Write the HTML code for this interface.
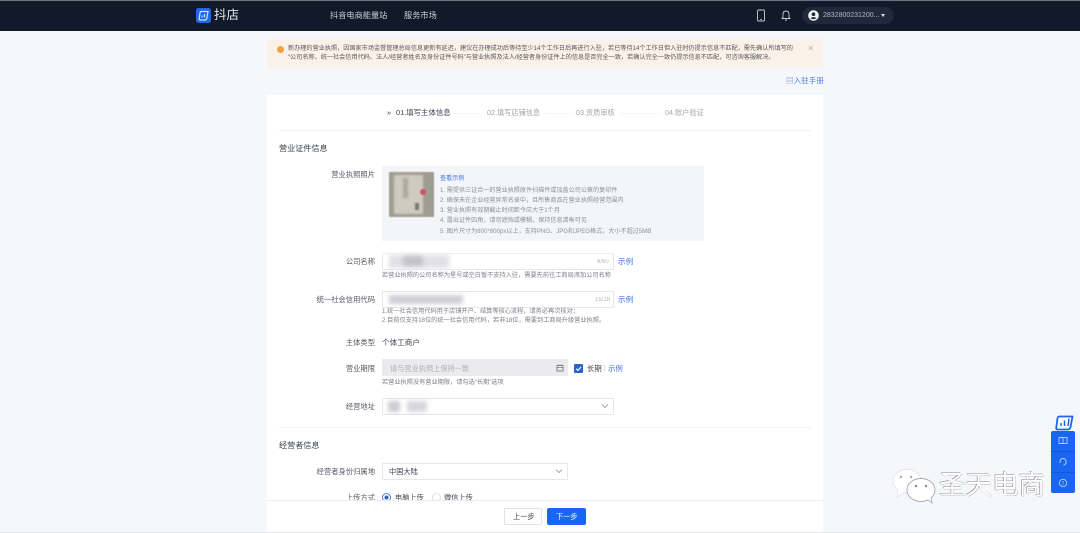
<!DOCTYPE html>
<html lang="zh">
<head>
<meta charset="utf-8">
<title>抖店</title>
<style>
html,body{margin:0;padding:0;width:1080px;height:533px;overflow:hidden;background:#f6f7fb;}
body{position:relative;font-family:"Liberation Sans","Noto Sans CJK SC",sans-serif;color:#3f4450;}
.a,.t{position:absolute;}
.t{white-space:nowrap;line-height:1;filter:blur(.35px);margin-top:1px;}
.lab{font-size:7.3px;color:#565a66;text-align:right;right:705px;}
.help{font-size:6.2px;color:#7c808a;left:382px;}
.tip{font-size:6.1px;color:#8d919b;left:440px;}
.link{color:#3f75e6;}
.box{position:absolute;background:#fff;border:1px solid #e6e7ea;box-sizing:border-box;border-radius:1px;}
.blur{position:absolute;background:#c9c9cf;filter:blur(2px);}
</style>
</head>
<body>
<!-- header -->
<div class="a" style="left:0;top:0;width:1080px;height:31px;background:#121a2a;border-top:1px solid #6b7280;box-sizing:border-box;"></div>
<svg class="a" style="left:196px;top:8px" width="15" height="15" viewBox="0 0 15 15">
<rect x="0" y="0" width="15" height="15" rx="2.5" fill="#1d6ae5"/>
<path d="M5 3.500H12L10.800 10.500Q10.400 12 8.800 12H4Q3 12 3.200 10.500L4 5Q4.200 3.500 5 3.500Z" fill="none" stroke="#cfe2ff" stroke-width="1.2"/>
<path d="M6 9.500V7.500M8.500 9.500V6" stroke="#cfe2ff" stroke-width="1.2"/>
</svg>
<div class="t" style="left:214px;top:9px;font-size:12.5px;color:#e4e6ea;margin-top:0;">抖店</div>
<div class="t" style="left:330px;top:12px;font-size:8.2px;color:#c9ccd2;margin-top:0;">抖音电商能量站</div>
<div class="t" style="left:404px;top:12px;font-size:8.2px;color:#c9ccd2;margin-top:0;">服务市场</div>
<svg class="a" style="left:756px;top:9px" width="10" height="13" viewBox="0 0 10 13"><rect x="1.500" y="1" width="7" height="11" rx="1" fill="none" stroke="#c9ccd2" stroke-width=".9"/><path d="M4 10.300H6" stroke="#c9ccd2" stroke-width=".8"/></svg>
<svg class="a" style="left:781px;top:9px" width="10" height="13" viewBox="0 0 10 13"><path d="M1 9.500H9L8 8V5.200Q8 2.200 5 2Q2 2.200 2 5.200V8ZM4 11H6" fill="none" stroke="#c9ccd2" stroke-width=".9"/></svg>
<div class="a" style="left:802px;top:7px;width:92px;height:17px;border-radius:9px;background:#20283a;"></div>
<svg class="a" style="left:808px;top:10px" width="11" height="11" viewBox="0 0 11 11"><circle cx="5.500" cy="5.500" r="5.300" fill="#f2f3f5"/><circle cx="5.500" cy="4.200" r="1.800" fill="#20283a"/><path d="M2.400 8.300Q5.500 5.800 8.600 8.300Q5.500 10 2.400 8.300Z" fill="#20283a"/></svg>
<div class="t" style="left:823px;top:12px;font-size:7px;color:#b3b7bf;margin-top:0;">2832800231200...</div>
<div class="a" style="left:881px;top:14px;border:2.6px solid transparent;border-top:3px solid #dfe1e5;border-bottom:0;"></div>

<!-- alert -->
<div class="a" style="left:267px;top:39px;width:556px;height:28px;background:#faf1e9;border-radius:2px;"></div>
<div class="a" style="left:277px;top:46px;width:7px;height:7px;border-radius:50%;background:#f3a13c;"></div>
<div class="t" style="left:288px;top:44.500px;font-size:6.150px;color:#5b5a5a;">新办理的营业执照&#65292;因国家市场监督管理总局信息更新有延迟&#65292;建议在办理成功后等待至少14个工作日后再进行入驻&#65292;若已等待14个工作日但入驻时仍提示信息不匹配&#65292;需先确认所填写的</div>
<div class="t" style="left:288px;top:53.500px;font-size:6.150px;color:#5b5a5a;">“公司名称、统一社会信用代码、法人/经营者姓名及身份证件号码”与营业执照及法人/经营者身份证件上的信息是否完全一致&#65292;若确认完全一致仍提示信息不匹配&#65292;可咨询客服解决。</div>
<div class="t" style="left:808px;top:43px;font-size:9px;color:#b0a9a3;">×</div>

<div class="t link" style="left:786px;top:76px;font-size:7.600px;color:#4f80e6;">▤入驻手册</div>

<!-- card -->
<div class="a" style="left:267px;top:95px;width:556px;height:438px;background:#fff;"></div>

<!-- steps -->
<div class="t" style="left:387px;top:108px;font-size:7.400px;color:#3f4450;">»</div>
<div class="t" style="left:396px;top:108px;font-size:7.400px;color:#3f4450;">01.填写主体信息</div>
<div class="a" style="left:454px;top:113px;width:28px;border-top:1px dotted #eeeef0;"></div>
<div class="t" style="left:487px;top:108px;font-size:7.200px;color:#a2a5ad;">02.填写店铺信息</div>
<div class="a" style="left:544px;top:113px;width:28px;border-top:1px dotted #eeeef0;"></div>
<div class="t" style="left:576px;top:108px;font-size:7.200px;color:#a2a5ad;">03.资质审核</div>
<div class="a" style="left:620px;top:113px;width:40px;border-top:1px dotted #eeeef0;"></div>
<div class="t" style="left:665px;top:108px;font-size:7.200px;color:#a2a5ad;">04.账户验证</div>
<div class="a" style="left:279px;top:130px;width:532px;height:1px;background:#f3f3f5;"></div>

<div class="t" style="left:279px;top:144px;font-size:8.100px;color:#3f4450;">营业证件信息</div>

<!-- license -->
<div class="t lab" style="top:170px;">营业执照照片</div>
<div class="a" style="left:382px;top:166px;width:322px;height:75px;background:#f4f5f8;"></div>
<div class="a" style="left:389px;top:172px;width:45px;height:45px;background:#a09c92;border-radius:1px;filter:blur(.6px);"></div>
<div class="a" style="left:394px;top:175px;width:29px;height:39px;background:#cfcbc1;filter:blur(1px);"></div>
<div class="a" style="left:403px;top:178px;width:5px;height:20px;background:#aca89b;filter:blur(1px);"></div>
<div class="a" style="left:415px;top:203px;width:4px;height:7px;background:#77796e;filter:blur(.8px);"></div>
<div class="a" style="left:420px;top:189px;width:6px;height:6px;border-radius:50%;background:#d8505f;filter:blur(.6px);"></div>
<div class="t tip link" style="top:175px;color:#3f75e6;">查看示例</div>
<div class="t tip" style="top:187px;">1. 需提供三证合一的营业执照原件扫描件或加盖公司公章的复印件</div>
<div class="t tip" style="top:197px;">2. 确保未在企业经营异常名录中&#65292;且所售商品在营业执照经营范围内</div>
<div class="t tip" style="top:207px;">3. 营业执照有效期截止时间距今应大于1个月</div>
<div class="t tip" style="top:217px;">4. 露出证件四角&#65292;请勿遮挡或模糊&#65292;保持信息清晰可见</div>
<div class="t tip" style="top:228px;">5. 图片尺寸为800*800px以上&#65292;支持PNG、JPG和JPEG格式&#65292;大小不超过5MB</div>

<!-- company -->
<div class="t lab" style="top:257px;">公司名称</div>
<div class="box" style="left:382px;top:253px;width:232px;height:17px;border-top-color:#f0f0f2;"></div>
<div class="blur" style="left:389px;top:255px;width:60px;height:13px;background:#e2e2e6;"></div>
<div class="blur" style="left:403px;top:256px;width:20px;height:10px;background:#c2c2c8;"></div>
<div class="t" style="left:597px;top:258px;font-size:6px;color:#b4b6bc;">6/60</div>
<div class="t link" style="left:618px;top:257px;font-size:7.600px;">示例</div>
<div class="t help" style="top:272px;">若营业执照的公司名称为星号或空白暂不支持入驻&#65292;需要先前往工商局添加公司名称</div>

<!-- credit -->
<div class="t lab" style="top:295px;">统一社会信用代码</div>
<div class="box" style="left:382px;top:291px;width:232px;height:17px;"></div>
<div class="blur" style="left:389px;top:295px;width:74px;height:9px;background:#cfcfd5;"></div>
<div class="t" style="left:595px;top:296px;font-size:6px;color:#b4b6bc;">15/18</div>
<div class="t link" style="left:618px;top:295px;font-size:7.600px;">示例</div>
<div class="t help" style="top:308px;">1.统一社会信用代码用于店铺开户、结算等核心流程&#65292;请务必再次核对&#65307;</div>
<div class="t help" style="top:317px;">2.目前仅支持18位的统一社会信用代码&#65292;若非18位&#65292;需要到工商局升级营业执照。</div>

<!-- type -->
<div class="t lab" style="top:338px;">主体类型</div>
<div class="t" style="left:382px;top:338px;font-size:7.600px;color:#3f4450;">个体工商户</div>

<!-- period -->
<div class="t lab" style="top:364px;">营业期限</div>
<div class="a" style="left:382px;top:359px;width:186px;height:17px;background:#ebebed;border-radius:1px;"></div>
<div class="t" style="left:390px;top:364px;font-size:7.200px;color:#adafb5;">请与营业执照上保持一致</div>
<svg class="a" style="left:556px;top:364px" width="8" height="8" viewBox="0 0 8 8"><rect x="1" y="1.500" width="6" height="5.500" fill="none" stroke="#777" stroke-width=".9"/><path d="M1 3.500H7M3 .5V2M5 .5V2" stroke="#777" stroke-width=".8"/></svg>
<svg class="a" style="left:574px;top:364px" width="9" height="9" viewBox="0 0 9 9"><rect width="9" height="9" rx="1" fill="#2a62c9"/><path d="M2 4.600L3.900 6.400L7 2.900" fill="none" stroke="#fff" stroke-width="1.100"/></svg>
<div class="t" style="left:587px;top:364px;font-size:7.400px;color:#3f4450;">长期</div>
<div class="a" style="left:604px;top:365px;width:1px;height:7px;background:#dfe0e3;"></div>
<div class="t link" style="left:608px;top:364px;font-size:7.400px;">示例</div>
<div class="t help" style="top:379px;">若营业执照没有营业期限&#65292;请勾选“长期”选项</div>

<!-- address -->
<div class="t lab" style="top:402px;">经营地址</div>
<div class="box" style="left:382px;top:398px;width:232px;height:17px;"></div>
<div class="blur" style="left:388px;top:401px;width:12px;height:11px;background:#cdcdd2;"></div>
<div class="blur" style="left:407px;top:401px;width:20px;height:11px;background:#d8d8dc;"></div>
<svg class="a" style="left:601px;top:403px" width="8" height="6" viewBox="0 0 8 6"><path d="M1 1.500L4 4.500L7 1.500" fill="none" stroke="#8c8f96" stroke-width=".8"/></svg>

<div class="a" style="left:279px;top:427px;width:532px;height:1px;background:#f3f3f5;"></div>
<div class="t" style="left:279px;top:441px;font-size:8.100px;color:#3f4450;">经营者信息</div>

<div class="t lab" style="top:467px;">经营者身份归属地</div>
<div class="box" style="left:382px;top:463px;width:186px;height:17px;"></div>
<div class="t" style="left:389px;top:467px;font-size:7.200px;color:#3f4450;">中国大陆</div>
<svg class="a" style="left:555px;top:468px" width="8" height="6" viewBox="0 0 8 6"><path d="M1 1.500L4 4.500L7 1.500" fill="none" stroke="#8c8f96" stroke-width=".8"/></svg>

<div class="t lab" style="top:493px;">上传方式</div>
<svg class="a" style="left:382px;top:493px" width="9" height="9" viewBox="0 0 9 9"><circle cx="4.500" cy="4.500" r="4" fill="#fff" stroke="#2a62c9" stroke-width=".8"/><circle cx="4.500" cy="4.500" r="2" fill="#2a62c9"/></svg>
<div class="t" style="left:395px;top:493px;font-size:7.200px;color:#3f4450;">电脑上传</div>
<svg class="a" style="left:432px;top:493px" width="9" height="9" viewBox="0 0 9 9"><circle cx="4.500" cy="4.500" r="4" fill="#fff" stroke="#d5d6da" stroke-width=".8"/></svg>
<div class="t" style="left:444px;top:493px;font-size:7.200px;color:#3f4450;">微信上传</div>

<!-- footer -->
<div class="a" style="left:267px;top:500px;width:556px;height:33px;background:#fff;border-top:1px solid #ececef;box-sizing:border-box;"></div>
<div class="a" style="left:0;top:532px;width:1080px;height:1px;background:#e4e5e9;"></div>
<div class="box" style="left:504px;top:508px;width:38px;height:17px;border-color:#e2e3e6;"></div>
<div class="t" style="left:513px;top:512px;font-size:7.200px;color:#3f4450;">上一步</div>
<div class="a" style="left:547px;top:508px;width:39px;height:17px;background:#1966f2;border-radius:2px;"></div>
<div class="t" style="left:556px;top:512px;font-size:7.200px;color:#fff;">下一步</div>

<!-- floating panel -->
<svg class="a" style="left:1055px;top:415px" width="19" height="16" viewBox="0 0 19 16">
<path d="M4 1.500H17.500L15.500 12Q15 14.500 12.500 14.500H2.500Q1 14.500 1.300 12.500L2.400 4Q2.700 1.500 4 1.500Z" fill="#fff" stroke="#1966f2" stroke-width="1.800"/>
<path d="M6 11V8M9.500 11V5.500M13 11L14 3.500" stroke="#1966f2" stroke-width="1.500" fill="none"/>
</svg>
<div class="a" style="left:1051px;top:431px;width:24px;height:62px;background:#1966f2;border-radius:2px;"></div>
<div class="a" style="left:1051px;top:451px;width:24px;height:1px;background:#1658d4;"></div>
<div class="a" style="left:1051px;top:472px;width:24px;height:1px;background:#1658d4;"></div>
<svg class="a" style="left:1058px;top:436px" width="10" height="9" viewBox="0 0 10 9"><path d="M1 1.500H5V7.500H1ZM5 1.500H9V7.500H5Z" fill="none" stroke="#b6cffc" stroke-width=".9"/></svg>
<svg class="a" style="left:1058px;top:457px" width="10" height="10" viewBox="0 0 10 10"><path d="M2 6V4.500A3 3 0 0 1 8 4.500V6.500L5.500 8.500" fill="none" stroke="#b6cffc" stroke-width=".9"/></svg>
<svg class="a" style="left:1058px;top:478px" width="10" height="10" viewBox="0 0 10 10"><circle cx="5" cy="5" r="3.700" fill="none" stroke="#b6cffc" stroke-width=".9"/><path d="M5 3V5.500M5 6.300V7" stroke="#b6cffc" stroke-width=".8"/></svg>

<!-- watermark -->
<svg class="a" style="left:891px;top:468px" width="48" height="36" viewBox="0 0 48 36">
<ellipse cx="16" cy="13" rx="14" ry="11.500" fill="#fff" stroke="#dcdde1" stroke-width=".7"/>
<path d="M7 21L6 29L14 24Z" fill="#fff" stroke="#dcdde1" stroke-width=".7"/>
<ellipse cx="16" cy="13" rx="13.600" ry="11.100" fill="#fff"/>
<ellipse cx="30" cy="22" rx="14" ry="11.500" fill="#fff" stroke="#a3a5ac" stroke-width=".9"/>
<path d="M36 31L41 35L40 28Z" fill="#fff" stroke="#a3a5ac" stroke-width=".8"/>
<ellipse cx="30" cy="22" rx="13.500" ry="11" fill="#fff"/>
<circle cx="10" cy="9" r="1.200" fill="#aaa"/><circle cx="20" cy="9" r="1.200" fill="#aaa"/>
<circle cx="25" cy="18" r="1.200" fill="#888"/><circle cx="35" cy="18" r="1.200" fill="#888"/>
</svg>
<div class="t" style="left:939px;top:472px;font-size:26.500px;color:#fff;text-shadow:-.6px -.6px 0 #85878e,.5px .5px 0 #b9bac0;filter:none;margin-top:0;">圣天电商</div>
</body>
</html>
